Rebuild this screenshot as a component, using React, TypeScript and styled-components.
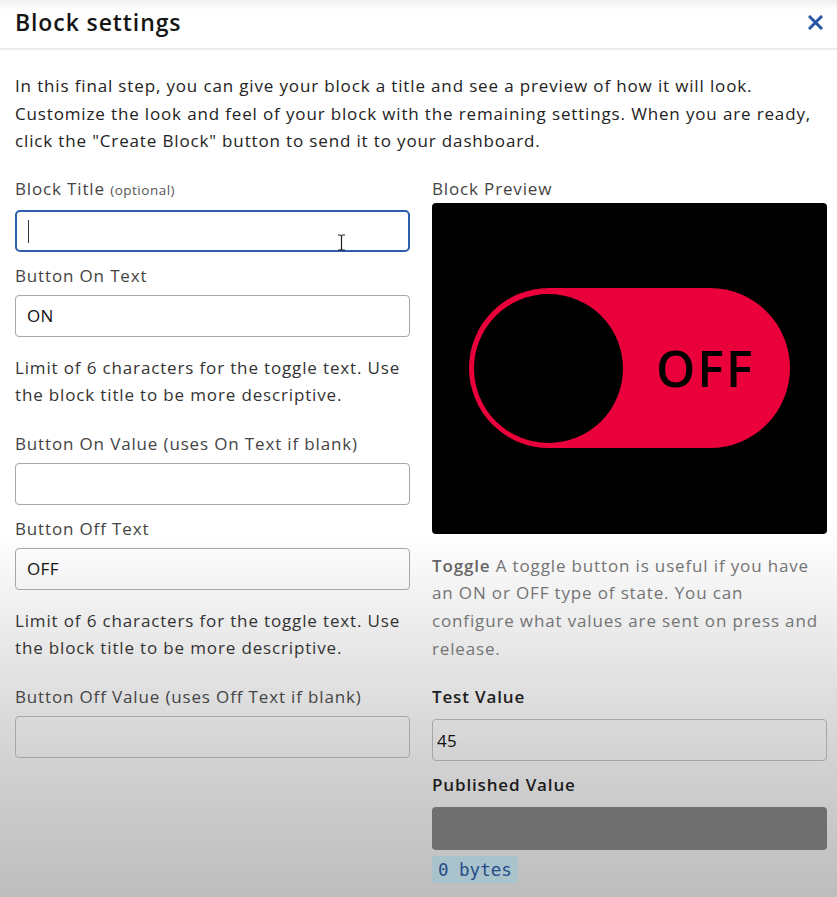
import React from "react";
import styled, { createGlobalStyle } from "styled-components";

const FONT = `"Open Sans", "Noto Sans", sans-serif`;

const Global = createGlobalStyle`
  html, body { margin: 0; padding: 0; }
  body {
    font-family: ${FONT};
    background: #bdbdbd;
  }
`;

const Page = styled.div`
  width: 837px;
  min-height: 897px;
  background: linear-gradient(
    to bottom,
    #efefef 0px,
    #ffffff 10px,
    #ffffff 530px,
    #e9e9e9 640px,
    #d2d2d2 760px,
    #bdbdbd 897px
  );
  box-sizing: border-box;
`;

const Header = styled.header`
  height: 50px;
  display: flex;
  align-items: center;
  justify-content: space-between;
  padding: 0 13px 4px 15px;
  border-bottom: 2px solid #ececec;
  box-sizing: border-box;
`;

const Title = styled.h1`
  margin: 0;
  font-size: 23px;
  font-weight: 600;
  letter-spacing: 0.9px;
  color: #151515;
`;

const CloseButton = styled.button`
  border: 0;
  background: transparent;
  padding: 0;
  width: 18px;
  height: 18px;
  display: flex;
  align-items: center;
  justify-content: center;
  cursor: pointer;
`;

const Body = styled.div`
  padding: 22px 4px 0 15px;
  letter-spacing: 0.85px;
`;

const Intro = styled.p`
  margin: 0 0 22px;
  font-size: 17px;
  line-height: 27.5px;
  color: #222;
  white-space: nowrap;
`;

const Columns = styled.div`
  display: grid;
  grid-template-columns: 395px 395px;
  column-gap: 22px;
  align-items: start;
`;

const Column = styled.div`
  display: flex;
  flex-direction: column;
`;

const Field = styled.div<{ $gap?: number; $after?: number }>`
  display: flex;
  flex-direction: column;
  gap: ${(p) => p.$gap ?? 8}px;
  margin-bottom: ${(p) => p.$after ?? 12}px;
`;

const Label = styled.label<{ $strong?: boolean }>`
  font-size: 17px;
  line-height: 24px;
  color: ${(p) => (p.$strong ? "#1c1c1c" : "#444")};
  font-weight: ${(p) => (p.$strong ? 600 : 400)};
  white-space: nowrap;
`;

const Optional = styled.span`
  font-size: 13.5px;
  letter-spacing: 0.5px;
  color: #555;
`;

const InputWrap = styled.div`
  position: relative;
`;

const TextInput = styled.input<{ $focused?: boolean; $pad?: number }>`
  box-sizing: border-box;
  width: 100%;
  height: 42px;
  padding: 0 ${(p) => p.$pad ?? 11}px;
  font-family: ${FONT};
  font-size: 17px;
  letter-spacing: 0.4px;
  color: #111;
  background: transparent;
  border: ${(p) => (p.$focused ? "2px solid #2d5fae" : "1px solid #a6a6a6")};
  border-radius: ${(p) => (p.$focused ? 5 : 4)}px;
  outline: none;
`;

const Caret = styled.span`
  position: absolute;
  left: 13px;
  top: 10px;
  width: 1px;
  height: 23px;
  background: #333;
`;

const IBeam = styled.svg`
  position: absolute;
  left: 322px;
  top: 24px;
`;

const Help = styled.p`
  margin: 5px 0 24px;
  font-size: 17px;
  line-height: 27px;
  color: #333;
  white-space: nowrap;
`;

const Preview = styled.div`
  margin-top: 2px;
  height: 331px;
  background: #000;
  border-radius: 4px;
  overflow: hidden;
`;

const Description = styled.p`
  margin: 18px 0 23px;
  font-size: 17px;
  line-height: 27.7px;
  color: #747474;
  white-space: nowrap;
`;

const Strong = styled.strong`
  color: #656565;
  font-weight: 600;
`;

const Published = styled.div`
  height: 43px;
  border-radius: 4px;
  background: #6f6f6f;
`;

const Bytes = styled.code`
  align-self: flex-start;
  margin-top: 6px;
  height: 27px;
  padding: 0 6px;
  display: flex;
  align-items: center;
  border-radius: 3px;
  background: #a9c3cc;
  color: #274b87;
  font-family: "DejaVu Sans Mono", monospace;
  font-size: 17.5px;
  letter-spacing: 0;
`;

const ToggleArt = () => (
  <svg width="395" height="331" viewBox="0 0 395 331">
    <rect x="37" y="85" width="321" height="160" rx="80" fill="#ea003b" />
    <circle cx="116.5" cy="165.5" r="74.5" fill="#000" />
    <text
      x="224"
      y="184"
      fontFamily="'Open Sans', 'Noto Sans', sans-serif"
      fontWeight="600"
      fontSize="50"
      letterSpacing="2"
      fill="#000"
    >
      OFF
    </text>
  </svg>
);

export default function App() {
  return (
    <Page>
      <Global />
      <Header>
        <Title>Block settings</Title>
        <CloseButton aria-label="Close">
          <svg width="15" height="15" viewBox="0 0 15 15">
            <path
              d="M2 2 L13 13 M13 2 L2 13"
              stroke="#2456a4"
              strokeWidth="3"
              strokeLinecap="square"
            />
          </svg>
        </CloseButton>
      </Header>
      <Body>
        <Intro>
          In this final step, you can give your block a title and see a preview of how it will look.
          <br />
          Customize the look and feel of your block with the remaining settings. When you are ready,
          <br />
          click the "Create Block" button to send it to your dashboard.
        </Intro>
        <Columns>
          <Column>
            <Field>
              <Label>
                Block Title <Optional>(optional)</Optional>
              </Label>
              <InputWrap>
                <TextInput $focused defaultValue="" />
                <Caret />
                <IBeam width="9" height="17" viewBox="0 0 9 17">
                  <path
                    d="M1 1 H3.5 Q4.5 1 4.5 3 V14 Q4.5 16 3.5 16 H1 M8 1 H5.5 Q4.5 1 4.5 3 M4.5 14 Q4.5 16 5.5 16 H8"
                    stroke="#222"
                    strokeWidth="1.2"
                    fill="none"
                  />
                </IBeam>
              </InputWrap>
            </Field>
            <Field $gap={7}>
              <Label>Button On Text</Label>
              <TextInput defaultValue="ON" />
            </Field>
            <Help>
              Limit of 6 characters for the toggle text. Use
              <br />
              the block title to be more descriptive.
            </Help>
            <Field $gap={7}>
              <Label>Button On Value (uses On Text if blank)</Label>
              <TextInput defaultValue="" />
            </Field>
            <Field $gap={7}>
              <Label>Button Off Text</Label>
              <TextInput defaultValue="OFF" />
            </Field>
            <Help>
              Limit of 6 characters for the toggle text. Use
              <br />
              the block title to be more descriptive.
            </Help>
            <Field $gap={7} $after={0}>
              <Label>Button Off Value (uses Off Text if blank)</Label>
              <TextInput defaultValue="" />
            </Field>
          </Column>
          <Column>
            <Label>Block Preview</Label>
            <Preview>
              <ToggleArt />
            </Preview>
            <Description>
              <Strong>Toggle</Strong> A toggle button is useful if you have
              <br />
              an ON or OFF type of state. You can
              <br />
              configure what values are sent on press and
              <br />
              release.
            </Description>
            <Field $gap={10}>
              <Label $strong>Test Value</Label>
              <TextInput $pad={4} defaultValue="45" />
            </Field>
            <Field $gap={10} $after={0}>
              <Label $strong>Published Value</Label>
              <Published />
            </Field>
            <Bytes>0 bytes</Bytes>
          </Column>
        </Columns>
      </Body>
    </Page>
  );
}
